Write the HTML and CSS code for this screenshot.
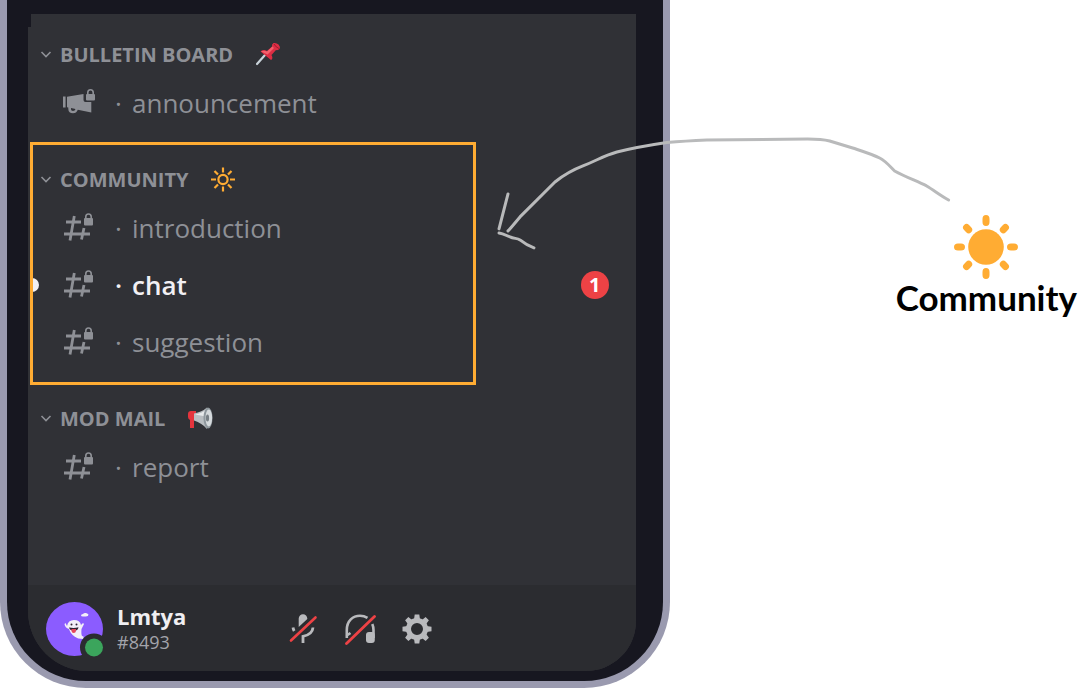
FILE: index.html
```html
<!DOCTYPE html>
<html lang="en">
<head>
  <meta charset="UTF-8">
  <meta name="viewport" content="width=device-width, initial-scale=1.0">
  <title>Community channels</title>
  <link rel="stylesheet" href="styles.css">
</head>
<body>
  <!-- shared icons -->
  <svg class="sprite" aria-hidden="true">
    <symbol id="chevron" viewBox="0 0 12 12">
      <path d="M1.5 4 6 8.5 10.5 4" fill="none" stroke="currentColor" stroke-width="1.6"/>
    </symbol>
    <symbol id="hash" viewBox="0 0 32 32">
      <path d="M11.3 4 7 28.500M21 16 18.500 27.500M3 10h15M1 22h26" fill="none" stroke="currentColor" stroke-width="2.8"/>
      <rect x="21" y="6" width="9" height="7.5" rx="1" fill="currentColor"/>
      <path d="M22.8 6.500V4.700a2.7 2.7 0 0 1 5.4 0v1.800" fill="none" stroke="currentColor" stroke-width="1.6"/>
    </symbol>
  </svg>

  <main class="page">
    <section class="phone">
      <div class="screen">
        <nav class="channels">
          <section class="category">
            <h2 class="category-title">
              <svg class="chevron"><use href="#chevron"/></svg>
              BULLETIN BOARD
              <svg class="emoji" viewBox="0 0 26 26">
                <path d="M2 23 10 14" stroke="#c9d3da" stroke-width="2.2" stroke-linecap="round"/>
                <path d="M5.5 10.500q3-2.500 6.500-.5l5-4.500q-.5-2.500 1.500-3.500 3-.5 5 1.500t1 4.500q-1.500 1.500-3.500 1l-4.500 5q2 3.500-.5 5z" fill="#dd2e44"/>
                <path d="M6 10.500q3-1.500 6 0l5.500-5L19 7l-6.500 6.500z" fill="#f4606c"/>
                <path d="M19 3q2 3.500 5 4.500" fill="none" stroke="#a0192f"/>
              </svg>
            </h2>
            <ul class="channel-list">
              <li>
                <a class="channel" href="#announcement">
                  <svg class="channel-icon" viewBox="0 0 32 32">
                    <path d="M0 9.5h2.6v11H0zM4 9.7 20.5 7v6q0 2 2 2h5.800v10.500L14.8 22.700Q13.5 26.300 10 26.300 5.500 26.300 5.300 22v-1.500L4 20.200zM8 21v1.200q0 1.800 2 1.800t2.500-2z" fill="currentColor" fill-rule="evenodd"/>
                    <rect x="23" y="7" width="9" height="6.500" rx="1" fill="currentColor"/>
                    <path d="M24.800 7.500v-2a2.700 2.700 0 0 1 5.400 0v2" fill="none" stroke="currentColor" stroke-width="1.6"/>
                  </svg>
                  <span class="dot">·</span>
                  <span>announcement</span>
                </a>
              </li>
            </ul>
          </section>

          <section class="category marked">
            <h2 class="category-title">
              <svg class="chevron"><use href="#chevron"/></svg>
              COMMUNITY
              <svg class="emoji" viewBox="0 0 26 26">
                <g fill="none" stroke="#ffac33" stroke-width="2.2">
                  <circle cx="13" cy="13.500" r="4.600"/>
                  <path d="M13 1.500v5M13 20.500v5M1 13.500h5M20 13.500h5M4.500 5 8 8.500M18 18.500l3.500 3.500M4.500 22 8 18.500M18 8.500 21.500 5"/>
                </g>
              </svg>
            </h2>
            <ul class="channel-list">
              <li>
                <a class="channel" href="#introduction">
                  <svg class="channel-icon"><use href="#hash"/></svg>
                  <span class="dot">·</span>
                  <span>introduction</span>
                </a>
              </li>
              <li>
                <a class="channel unread" href="#chat">
                  <svg class="channel-icon"><use href="#hash"/></svg>
                  <span class="dot">·</span>
                  <span>chat</span>
                  <span class="badge">1</span>
                </a>
              </li>
              <li>
                <a class="channel" href="#suggestion">
                  <svg class="channel-icon"><use href="#hash"/></svg>
                  <span class="dot">·</span>
                  <span>suggestion</span>
                </a>
              </li>
            </ul>
          </section>

          <section class="category">
            <h2 class="category-title">
              <svg class="chevron"><use href="#chevron"/></svg>
              MOD MAIL
              <svg class="emoji" viewBox="0 0 26 26">
                <path d="M1 9q0-3 3-3h5v8l-2 .5V23H3v-8q-2-1-2-3z" fill="#e5343d"/>
                <path d="M7 8.500Q15 7 20 2.500V24Q15 18 7 15.500z" fill="#b9bec2"/>
                <path d="M8 9.500q7-1 11-5v7z" fill="#e6e9eb"/>
                <ellipse cx="21" cy="13" rx="4.500" ry="10.500" fill="#8e979d"/>
                <ellipse cx="21.800" cy="13" rx="3.300" ry="8.500" fill="#d5dadd"/>
                <ellipse cx="20.500" cy="13" rx="1.600" ry="3.500" fill="#777f85"/>
              </svg>
            </h2>
            <ul class="channel-list">
              <li>
                <a class="channel" href="#report">
                  <svg class="channel-icon"><use href="#hash"/></svg>
                  <span class="dot">·</span>
                  <span>report</span>
                </a>
              </li>
            </ul>
          </section>
        </nav>

        <footer class="user-bar">
          <svg class="avatar" viewBox="0 0 58 56">
            <ellipse cx="28.500" cy="28" rx="28.500" ry="27" fill="#8b5cff"/>
            <path d="M35 14.500q0-1.500 2-1.500 1-1.500 3-1t2.500 1.500q0 2-2.500 2h-3q-2 0-2-1z" fill="#f3eff8"/>
            <path d="M21 25q1-6 7-6t7 5l2-2 1 1-2.500 5q-.5 5 .5 7l1.500.5v2.500q-6 0-9-2.500-4-2.500-5.500-7.500-4-1-4.500-5l1-1z" fill="#f3eff8"/>
            <path d="M23 26.500q5 1 9.500-.2-.5 3.500-4.500 3.500t-5-3.300z" fill="#302433"/>
            <path d="M25.500 28H30v2q-.3 2-2.300 2t-2.200-2z" fill="#e5485d"/>
            <circle cx="25.500" cy="23.500" r="1" fill="#302433"/>
            <circle cx="30.500" cy="23.500" r="1" fill="#302433"/>
            <circle cx="48" cy="46.500" r="14" fill="#2b2c30"/>
            <circle cx="48" cy="46.500" r="9" fill="#3ba55c"/>
          </svg>
          <div class="user">
            <strong class="user-name">Lmtya</strong>
            <span class="user-tag">#8493</span>
          </div>
          <div class="controls">
            <button class="control" type="button" aria-label="Unmute">
              <svg viewBox="0 0 32 32">
                <path d="M11.700 14V5.600a4.300 4.300 0 0 1 8.600 0V6z" fill="currentColor"/>
                <path d="M26 14.500q-.5 7-10 8.800V30M6 14.500q.3 2 1.200 3.500" fill="none" stroke="currentColor" stroke-width="2.8"/>
                <path d="M4 27.500 28.500 4.500" stroke="#ed4245" stroke-width="2.600" stroke-linecap="round"/>
              </svg>
            </button>
            <button class="control" type="button" aria-label="Undeafen">
              <svg viewBox="0 0 32 32">
                <path d="M2.800 25v-8C2.800 7.500 9 2.800 16 2.800q4 0 7.500 2M28.300 11q1.200 3 1.200 6v8M2 23l4.500-3" fill="none" stroke="currentColor" stroke-width="2.6"/>
                <rect x="22" y="19" width="8.800" height="11" rx="3" fill="currentColor"/>
                <path d="M2.500 30.500 30.500 3.500" stroke="#ed4245" stroke-width="2.800" stroke-linecap="round"/>
              </svg>
            </button>
            <button class="control" type="button" aria-label="User settings">
              <svg viewBox="0 0 32 32">
                <circle cx="16" cy="16" r="8.500" fill="none" stroke="currentColor" stroke-width="5"/>
                <g fill="currentColor">
                  <path id="teeth" d="M13.700 1.500h4.600l.7 5h-6zM13.700 30.500h4.600l.7-5h-6z"/>
                  <use href="#teeth" transform="rotate(45 16 16)"/>
                  <use href="#teeth" transform="rotate(90 16 16)"/>
                  <use href="#teeth" transform="rotate(135 16 16)"/>
                </g>
              </svg>
            </button>
          </div>
        </footer>
      </div>
    </section>

    <aside class="legend">
      <svg class="legend-sun" viewBox="0 0 64 64">
        <g fill="#ffac33">
          <circle cx="32" cy="32" r="17.800"/>
          <path id="rays" d="M28.500 4q0-4 3.500-4t3.500 4v3q0 4-3.500 4t-3.500-4zM28.500 57q0-4 3.500-4t3.500 4v3q0 4-3.500 4t-3.500-4z"/>
          <use href="#rays" transform="rotate(90 32 32)"/>
          <path id="diagonal-rays" d="M28.500 4.500Q28.500 1 32 1t3.500 3.500v3Q35.500 11 32 11t-3.500-3.500zM28.500 56.500q0-3.500 3.500-3.500t3.500 3.500v3q0 3.500-3.500 3.500t-3.500-3.500z" transform="rotate(45 32 32)"/>
          <use href="#diagonal-rays" transform="rotate(90 32 32)"/>
        </g>
      </svg>
      <p class="legend-label">Community</p>
    </aside>

    <!-- arrow from the legend to the category -->
    <svg class="arrow" viewBox="0 0 454 113" aria-hidden="true">
      <path d="M452 63C443 58 437 53 430 49 420 44 409 40 398 34 393 29 389 24 383 21 375 17 365 14 356 11L333 4Q325 2 311 2L210 3Q188 4 170 5.500C153 8 136 11 120 15 106 19 101 23 86 29 73 34 67 38 58 45L23 80Q13 92 11 94M11 57 2 92M2 96C8 97 9 99 13 100 17 102 20 101 23 103 28 107 31 109 37 111"/>
    </svg>
  </main>
</body>
</html>
```
FILE: styles.css
```css
:root {
  --frame: #9a9aaf;
  --bezel: #171720;
  --panel: #303136;
  --panel-dark: #2b2c30;
  --muted: #8e9096;
  --accent: #ffac33;
  --danger: #ed4245;
}
*, ::before, ::after { box-sizing: border-box; }
body {
  margin: 0;
  background: #fff;
  color: #000;
  font-family: "Open Sans", "Noto Sans", sans-serif;
}
svg { display: block; flex: none; }
.sprite {
  position: absolute;
  width: 0;
  height: 0;
}
.page {
  position: relative;
  display: flex;
  min-height: 100vh;
}

/* phone */
.phone {
  display: flex;
  width: 62%;
  padding: 14px 27px 10px 21px;
  background: var(--bezel);
  border: 7px solid var(--frame);
  border-top: 0;
  border-radius: 0 0 86px 86px;
}
.screen {
  position: relative;
  display: flex;
  flex: 1;
  flex-direction: column;
  overflow: hidden;
  background: var(--panel);
  border-radius: 0 0 50px 60px;
}
.screen::before {
  content: "";
  position: absolute;
  top: 0;
  left: 0;
  width: 3px;
  height: 13px;
  background: var(--bezel);
}

/* channels */
.channels {
  display: flex;
  flex: 1;
  flex-direction: column;
  gap: 28px;
  padding: 21px 0 30px;
}
.category { position: relative; }
.marked::after {
  content: "";
  position: absolute;
  top: -18px;
  right: 160px;
  bottom: -14px;
  left: 2px;
  border: 3px solid var(--accent);
  pointer-events: none;
}
.category-title {
  display: flex;
  align-items: center;
  gap: 8px;
  height: 40px;
  margin: 0;
  padding: 0 0 2px 12px;
  color: var(--muted);
  font-size: 20px;
  font-weight: 700;
}
.chevron {
  width: 12px;
  height: 12px;
}
.emoji {
  width: 26px;
  height: 26px;
  margin-left: 14px;
}
.channel-list {
  margin: 0;
  padding: 0;
  list-style: none;
}
.channel {
  position: relative;
  display: flex;
  align-items: center;
  height: 57px;
  padding: 0 27px 2px 35px;
  color: var(--muted);
  font-size: 26px;
  line-height: 32px;
  text-decoration: none;
}
.channel-icon {
  width: 32px;
  height: 32px;
  color: var(--muted);
}
.dot {
  width: 17px;
  margin-left: 20px;
}
.unread {
  color: #f2f0f4;
  font-weight: 600;
}
.unread::before {
  content: "";
  position: absolute;
  left: 3px;
  width: 8px;
  height: 14px;
  background: #f2f0f4;
  border-radius: 0 7px 7px 0;
}
.badge {
  width: 28px;
  height: 28px;
  margin-left: auto;
  background: var(--danger);
  border-radius: 50%;
  color: #fff;
  font-size: 20px;
  font-weight: 700;
  line-height: 28px;
  text-align: center;
}

/* user bar */
.user-bar {
  display: flex;
  align-items: center;
  height: 86px;
  padding: 2px 0 0 18px;
  background: var(--panel-dark);
}
.avatar {
  width: 58px;
  height: 56px;
}
.user {
  display: flex;
  flex-direction: column;
  width: 183px;
  padding-left: 13px;
}
.user-name {
  color: #f0eff2;
  font-size: 22px;
  line-height: 27px;
}
.user-tag {
  color: #a3a4ab;
  font-size: 18px;
  line-height: 25px;
}
.controls {
  display: flex;
  gap: 25px;
}
.control {
  width: 32px;
  height: 32px;
  padding: 0;
  background: none;
  border: 0;
  color: #b9babd;
  cursor: pointer;
}

/* legend */
.legend {
  display: flex;
  flex-direction: column;
  align-items: center;
  align-self: flex-start;
  margin-left: auto;
  padding: 215px 3px 0 0;
}
.legend-sun {
  width: 64px;
  height: 64px;
}
.legend-label {
  margin: 0;
  font-family: Lato, "Noto Sans", sans-serif;
  font-size: 35px;
  font-weight: 700;
  line-height: 36px;
}
.arrow {
  position: absolute;
  top: 137px;
  left: 46%;
  width: 42%;
  overflow: visible;
  fill: none;
  stroke: #b9babb;
  stroke-width: 3;
  stroke-linecap: round;
  stroke-linejoin: round;
  pointer-events: none;
}
```
